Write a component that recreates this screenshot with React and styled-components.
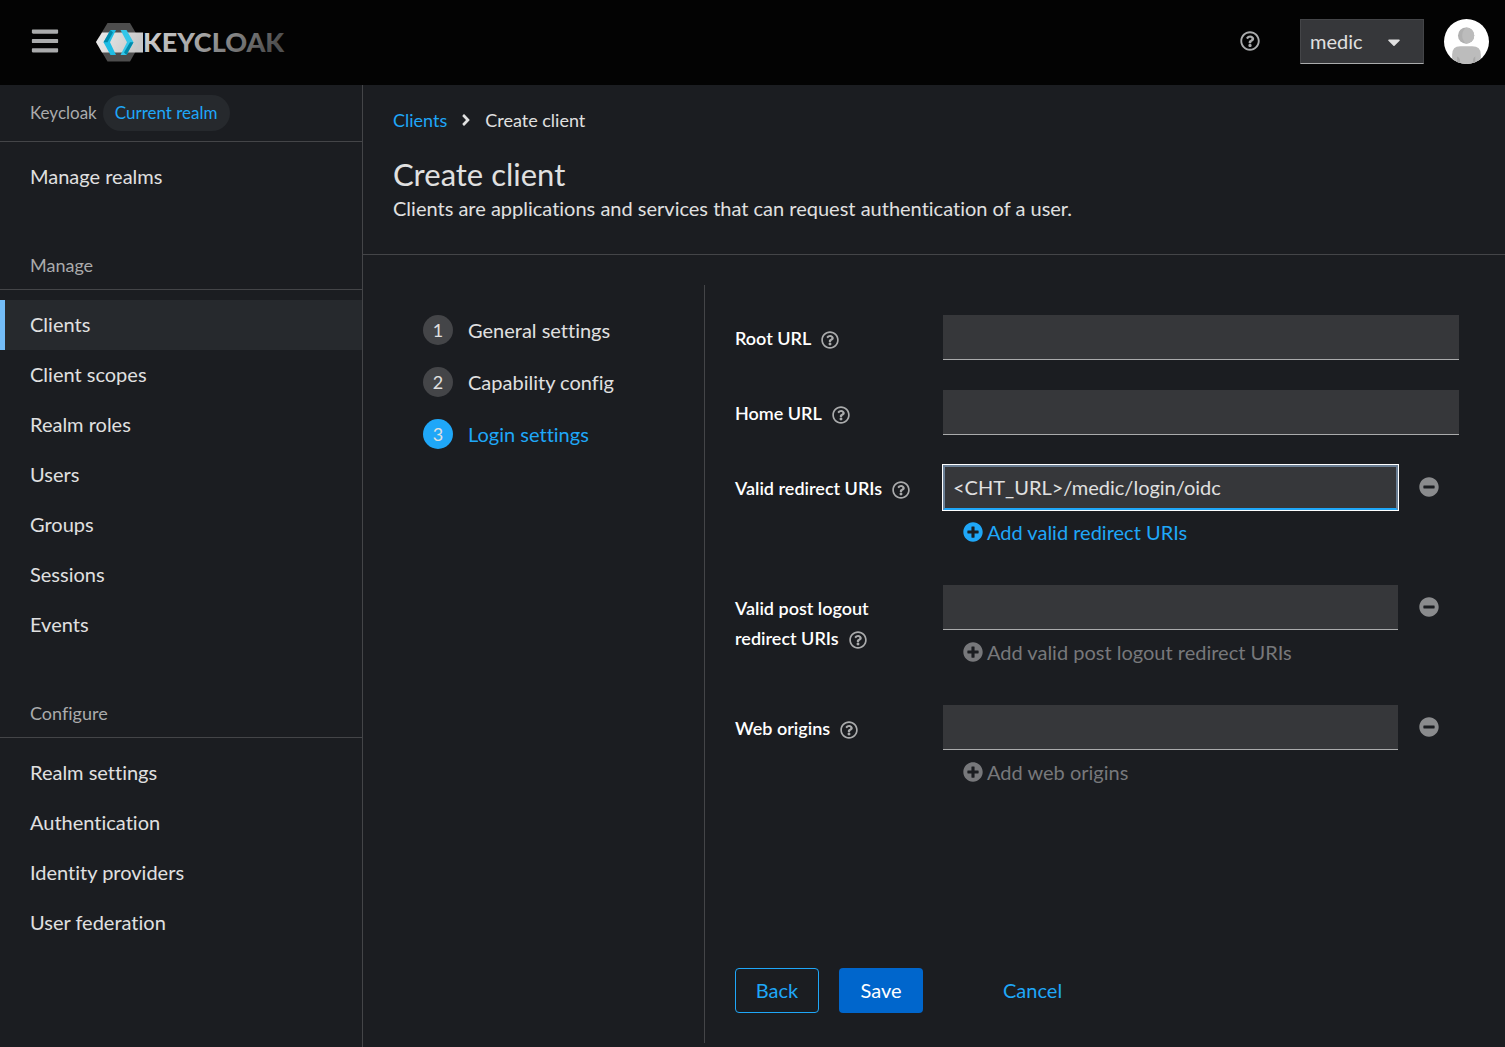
import React from "react";
import styled, { createGlobalStyle } from "styled-components";
//Icons
import {
	FaAngleRight,
	FaBars,
	FaCaretDown,
	FaMinusCircle,
	FaPlusCircle,
	FaRegQuestionCircle,
} from "react-icons/fa";

const manageLinks = [
	"Clients",
	"Client scopes",
	"Realm roles",
	"Users",
	"Groups",
	"Sessions",
	"Events",
];
const configureLinks = [
	"Realm settings",
	"Authentication",
	"Identity providers",
	"User federation",
];
const steps = ["General settings", "Capability config", "Login settings"];

const App = () => {
	return (
		<>
			<GlobalStyle />
			<Page>
				<Masthead />
				<Body>
					<Sidebar />
					<Main>
						<PageHeader>
							<Breadcrumb aria-label='Breadcrumb'>
								<a href='#clients'>Clients</a>
								<FaAngleRight size={18} />
								<span>Create client</span>
							</Breadcrumb>
							<h1>Create client</h1>
							<p>
								Clients are applications and services that can request
								authentication of a user.
							</p>
						</PageHeader>
						<Wizard>
							<Steps>
								{steps.map((step, i) => (
									<li key={step}>
										<Step $current={i === 2}>
											<span>{i + 1}</span>
											{step}
										</Step>
									</li>
								))}
							</Steps>
							<LoginSettings />
						</Wizard>
					</Main>
				</Body>
			</Page>
		</>
	);
};

const Masthead = () => (
	<Header>
		<IconButton aria-label='Global navigation'>
			<FaBars size={30} />
		</IconButton>
		<Brand href='#home' aria-label='Keycloak'>
			<Logo />
		</Brand>
		<IconButton aria-label='Help'>
			<FaRegQuestionCircle size={20} />
		</IconButton>
		<RealmSelect>
			<select aria-label='Realm' defaultValue='medic'>
				<option>medic</option>
			</select>
			<FaCaretDown size={20} />
		</RealmSelect>
		<Avatar />
	</Header>
);

const Logo = () => (
	<svg width='200' height='40' viewBox='0 0 200 40'>
		<defs>
			<linearGradient id='word' x1='0' x2='1' y1='0' y2='0.2'>
				<stop offset='0' stopColor='#d8d8d8' />
				<stop offset='0.5' stopColor='#a0a0a0' />
				<stop offset='1' stopColor='#505050' />
			</linearGradient>
			<linearGradient id='band' x1='0' x2='1' y1='0' y2='0.2'>
				<stop offset='0' stopColor='#ececec' />
				<stop offset='1' stopColor='#c8c8c8' />
			</linearGradient>
		</defs>
		<path d='M0 20 11.5 1H34L45 20 34 39.500H11.500Z' fill='#4d4d4d' />
		<path d='M0 20 6 10.500H47V30.500H6Z' fill='url(#band)' />
		<path d='M7.500 20.300 14.500 8H20L14 20.300 20 33H14.500Z' fill='#1fbde4' />
		<path d='M7.500 20.300 14.500 8 17 10.500 11.500 20.300Z' fill='#008aaa' />
		<path d='M24.500 8H30.500L37.500 20.300 30.500 33H24.500L31 20.300Z' fill='#33c6e9' />
		<path d='M37.500 20.300 30.500 33 28 30.500 34 20.300Z' fill='#008aaa' />
		<text x='47' y='30' fill='url(#word)'>
			KEYCLOAK
		</text>
	</svg>
);

const Avatar = () => (
	<svg width='45' height='45' viewBox='0 0 36 36' role='img' aria-label='User'>
		<defs>
			<clipPath id='face'>
				<circle cx='18' cy='18' r='18' />
			</clipPath>
		</defs>
		<g clipPath='url(#face)'>
			<rect width='36' height='36' fill='#fff' />
			<circle cx='17.700' cy='13.200' r='6.500' fill='#b0b0b0' />
			<path d='M17.700 6.700A6.500 6.500 0 0 1 17.700 19.700C13.500 16 13.500 10 17.700 6.700Z' fill='#bcbcbc' />
			<path
				d='M6.500 36V28.500Q6.500 21.800 13 21.800H22.500Q29.500 21.800 29.500 28.500V36Z'
				fill='#bcbcbc'
			/>
			<path d='M10.500 30Q13.500 31 12.700 36H10.500ZM25 30Q22.500 31 23.500 36H25Z' fill='#a8a8a8' />
		</g>
	</svg>
);

const Sidebar = () => (
	<Side>
		<Realm>
			Keycloak <span>Current realm</span>
		</Realm>
		<NavList>
			<NavLink href='#realms'>Manage realms</NavLink>
		</NavList>
		<NavTitle>Manage</NavTitle>
		<NavList>
			{manageLinks.map((name) => (
				<NavLink key={name} href='#nav' $current={name === "Clients"}>
					{name}
				</NavLink>
			))}
		</NavList>
		<NavTitle>Configure</NavTitle>
		<NavList>
			{configureLinks.map((name) => (
				<NavLink key={name} href='#nav'>
					{name}
				</NavLink>
			))}
		</NavList>
	</Side>
);

const Label = ({ id, children }) => (
	<FieldLabel>
		<label htmlFor={id}>{children}</label>
		<HelpButton type='button' aria-label='Help'>
			<FaRegQuestionCircle size={18} />
		</HelpButton>
	</FieldLabel>
);

const MultiField = ({ id, label, add, value = "", active }) => (
	<>
		<Label id={id}>{label}</Label>
		<div>
			<InputRow>
				<Input id={id} defaultValue={value} $active={active} />
				<RemoveButton type='button' aria-label='Remove'>
					<FaMinusCircle size={20} />
				</RemoveButton>
			</InputRow>
			<AddButton type='button' disabled={!active}>
				<FaPlusCircle size={20} />
				{add}
			</AddButton>
		</div>
	</>
);

const LoginSettings = () => (
	<Form>
		<Fields>
			<Label id='root'>Root URL</Label>
			<Input id='root' />
			<Label id='home'>Home URL</Label>
			<Input id='home' />
			<MultiField
				id='redirect'
				label='Valid redirect URIs'
				add='Add valid redirect URIs'
				value='<CHT_URL>/medic/login/oidc'
				active
			/>
			<MultiField
				id='logout'
				label='Valid post logout redirect URIs'
				add='Add valid post logout redirect URIs'
			/>
			<MultiField id='origins' label='Web origins' add='Add web origins' />
		</Fields>
		<Actions>
			<Button type='button' $variant='secondary'>
				Back
			</Button>
			<Button type='button' $variant='primary'>
				Save
			</Button>
			<Button type='button' $variant='link'>
				Cancel
			</Button>
		</Actions>
	</Form>
);

const GlobalStyle = createGlobalStyle`
	* {
		margin: 0;
		padding: 0;
		box-sizing: border-box;
	}
	body {
		background: #1b1d21;
		color: #e0e0e0;
		font: 400 20px/30px "Lato", sans-serif;
		font-variant-ligatures: none;
	}
	button, input, select {
		font: inherit;
		font-variant-ligatures: none;
		color: inherit;
		border: none;
		background: none;
	}
	a {
		color: inherit;
		text-decoration: none;
	}
	svg {
		flex: none;
		display: block;
	}
`;
const Page = styled.div`
	min-height: 100vh;
	display: flex;
	flex-direction: column;
`;
const Header = styled.header`
	height: 85px;
	padding: 0 16px 2px 30px;
	display: flex;
	align-items: center;
	background: #030303;
`;
const IconButton = styled.button`
	padding-bottom: 2px;
	color: #aaabac;
`;
const Brand = styled.a`
	margin: 0 auto 0 36px;

	text {
		font: 900 27px "Lato", sans-serif;
	}
`;
const RealmSelect = styled.div`
	display: grid;
	align-items: center;
	width: 124px;
	height: 45px;
	margin: 0 20px 0 40px;
	background: #36373a;
	border: 1px solid #444548;
	border-bottom-color: #aaabac;

	select,
	svg {
		grid-area: 1 / 1;
	}
	select {
		appearance: none;
		height: 43px;
		padding: 0 9px 2px;
	}
	svg {
		justify-self: end;
		margin-right: 19px;
		pointer-events: none;
	}
`;
const Body = styled.div`
	flex: 1;
	display: flex;
`;
const Side = styled.nav`
	flex: none;
	width: 363px;
	border-right: 1px solid #444548;
`;
const Realm = styled.div`
	display: flex;
	align-items: center;
	gap: 6px;
	height: 57px;
	padding: 0 30px;
	border-bottom: 1px solid #444548;
	font-size: 17px;
	color: #aaabac;

	span {
		padding: 3px 12px;
		border-radius: 18px;
		background: #26292d;
		color: #1fa7f8;
	}
`;
const NavTitle = styled.h2`
	margin-top: 30px;
	padding: 8px 30px 9px;
	border-bottom: 1px solid #444548;
	font-size: 18px;
	font-weight: 400;
	color: #aaabac;
`;
const NavList = styled.div`
	padding: 10px 0;
`;
const NavLink = styled.a`
	display: block;
	padding: 9px 25px 11px;
	border-left: 5px solid ${(props) => (props.$current ? "#73bcf7" : "transparent")};
	background: ${(props) => (props.$current ? "#26292d" : "none")};
`;
const Main = styled.main`
	flex: 1;
	display: flex;
	flex-direction: column;
`;
const PageHeader = styled.section`
	padding: 20px 30px 31px;
	border-bottom: 1px solid #444548;

	h1 {
		margin-top: 20px;
		font-size: 31px;
		line-height: 38px;
		font-weight: 400;
	}
`;
const Breadcrumb = styled.nav`
	display: flex;
	align-items: center;
	gap: 10px;
	font-size: 18px;

	a {
		color: #1fa7f8;
	}
`;
const Wizard = styled.section`
	flex: 1;
	display: flex;
	padding: 30px 0 4px 30px;
`;
const Steps = styled.ol`
	flex: none;
	display: flex;
	flex-direction: column;
	gap: 22px;
	width: 312px;
	padding: 30px;
	border-right: 1px solid #444548;
	list-style: none;
`;
const Step = styled.button`
	display: flex;
	gap: 15px;
	color: ${(props) => (props.$current ? "#1fa7f8" : "#e0e0e0")};

	span {
		width: 30px;
		border-radius: 50%;
		background: ${(props) => (props.$current ? "#1fa7f8" : "#444548")};
		color: #e0e0e0;
		font-size: 18px;
	}
`;
const Form = styled.form`
	flex: 1;
	display: flex;
	flex-direction: column;
	justify-content: space-between;
	padding: 30px 46px 30px 30px;
`;
const Fields = styled.div`
	display: grid;
	grid-template-columns: 188px 1fr;
	gap: 30px 20px;
`;
const FieldLabel = styled.div`
	height: 45px;
	padding-top: 8px;
	font-size: 18px;
	font-weight: 600;
	color: #fff;
`;
const HelpButton = styled.button`
	margin-left: 10px;
	vertical-align: middle;
	color: #aaabac;
`;
const Input = styled.input`
	width: 100%;
	height: 45px;
	padding: 0 10px 2px;
	background: #36373a;
	border-bottom: 1px solid #aaabac;
	${(props) =>
		props.$active &&
		`
		padding: 0 8px 2px;
		border: 2px solid #6b7f95;
		border-bottom-color: #1fa7f8;
		outline: 1px solid #fff;
	`}
`;
const InputRow = styled.div`
	display: flex;
`;
const RemoveButton = styled.button`
	flex: none;
	padding: 0 20px 2px 21px;
	color: #8a8b8d;
`;
const AddButton = styled.button`
	display: flex;
	align-items: center;
	gap: 4px;
	height: 45px;
	padding: 0 20px 2px;
	color: #1fa7f8;

	&:disabled {
		color: #77787b;
	}
`;
const Actions = styled.footer`
	display: flex;
	gap: 20px;
`;
const Button = styled.button`
	height: 45px;
	min-width: 84px;
	padding: 0 19px 2px;
	border: 1px solid transparent;
	border-radius: 4px;
	color: #1fa7f8;
	${(props) => props.$variant === "secondary" && "border-color: #1fa7f8;"}
	${(props) => props.$variant === "primary" && "background: #0066cc; color: #fff;"}
	${(props) => props.$variant === "link" && "margin-left: 40px;"}
`;

export default App;
